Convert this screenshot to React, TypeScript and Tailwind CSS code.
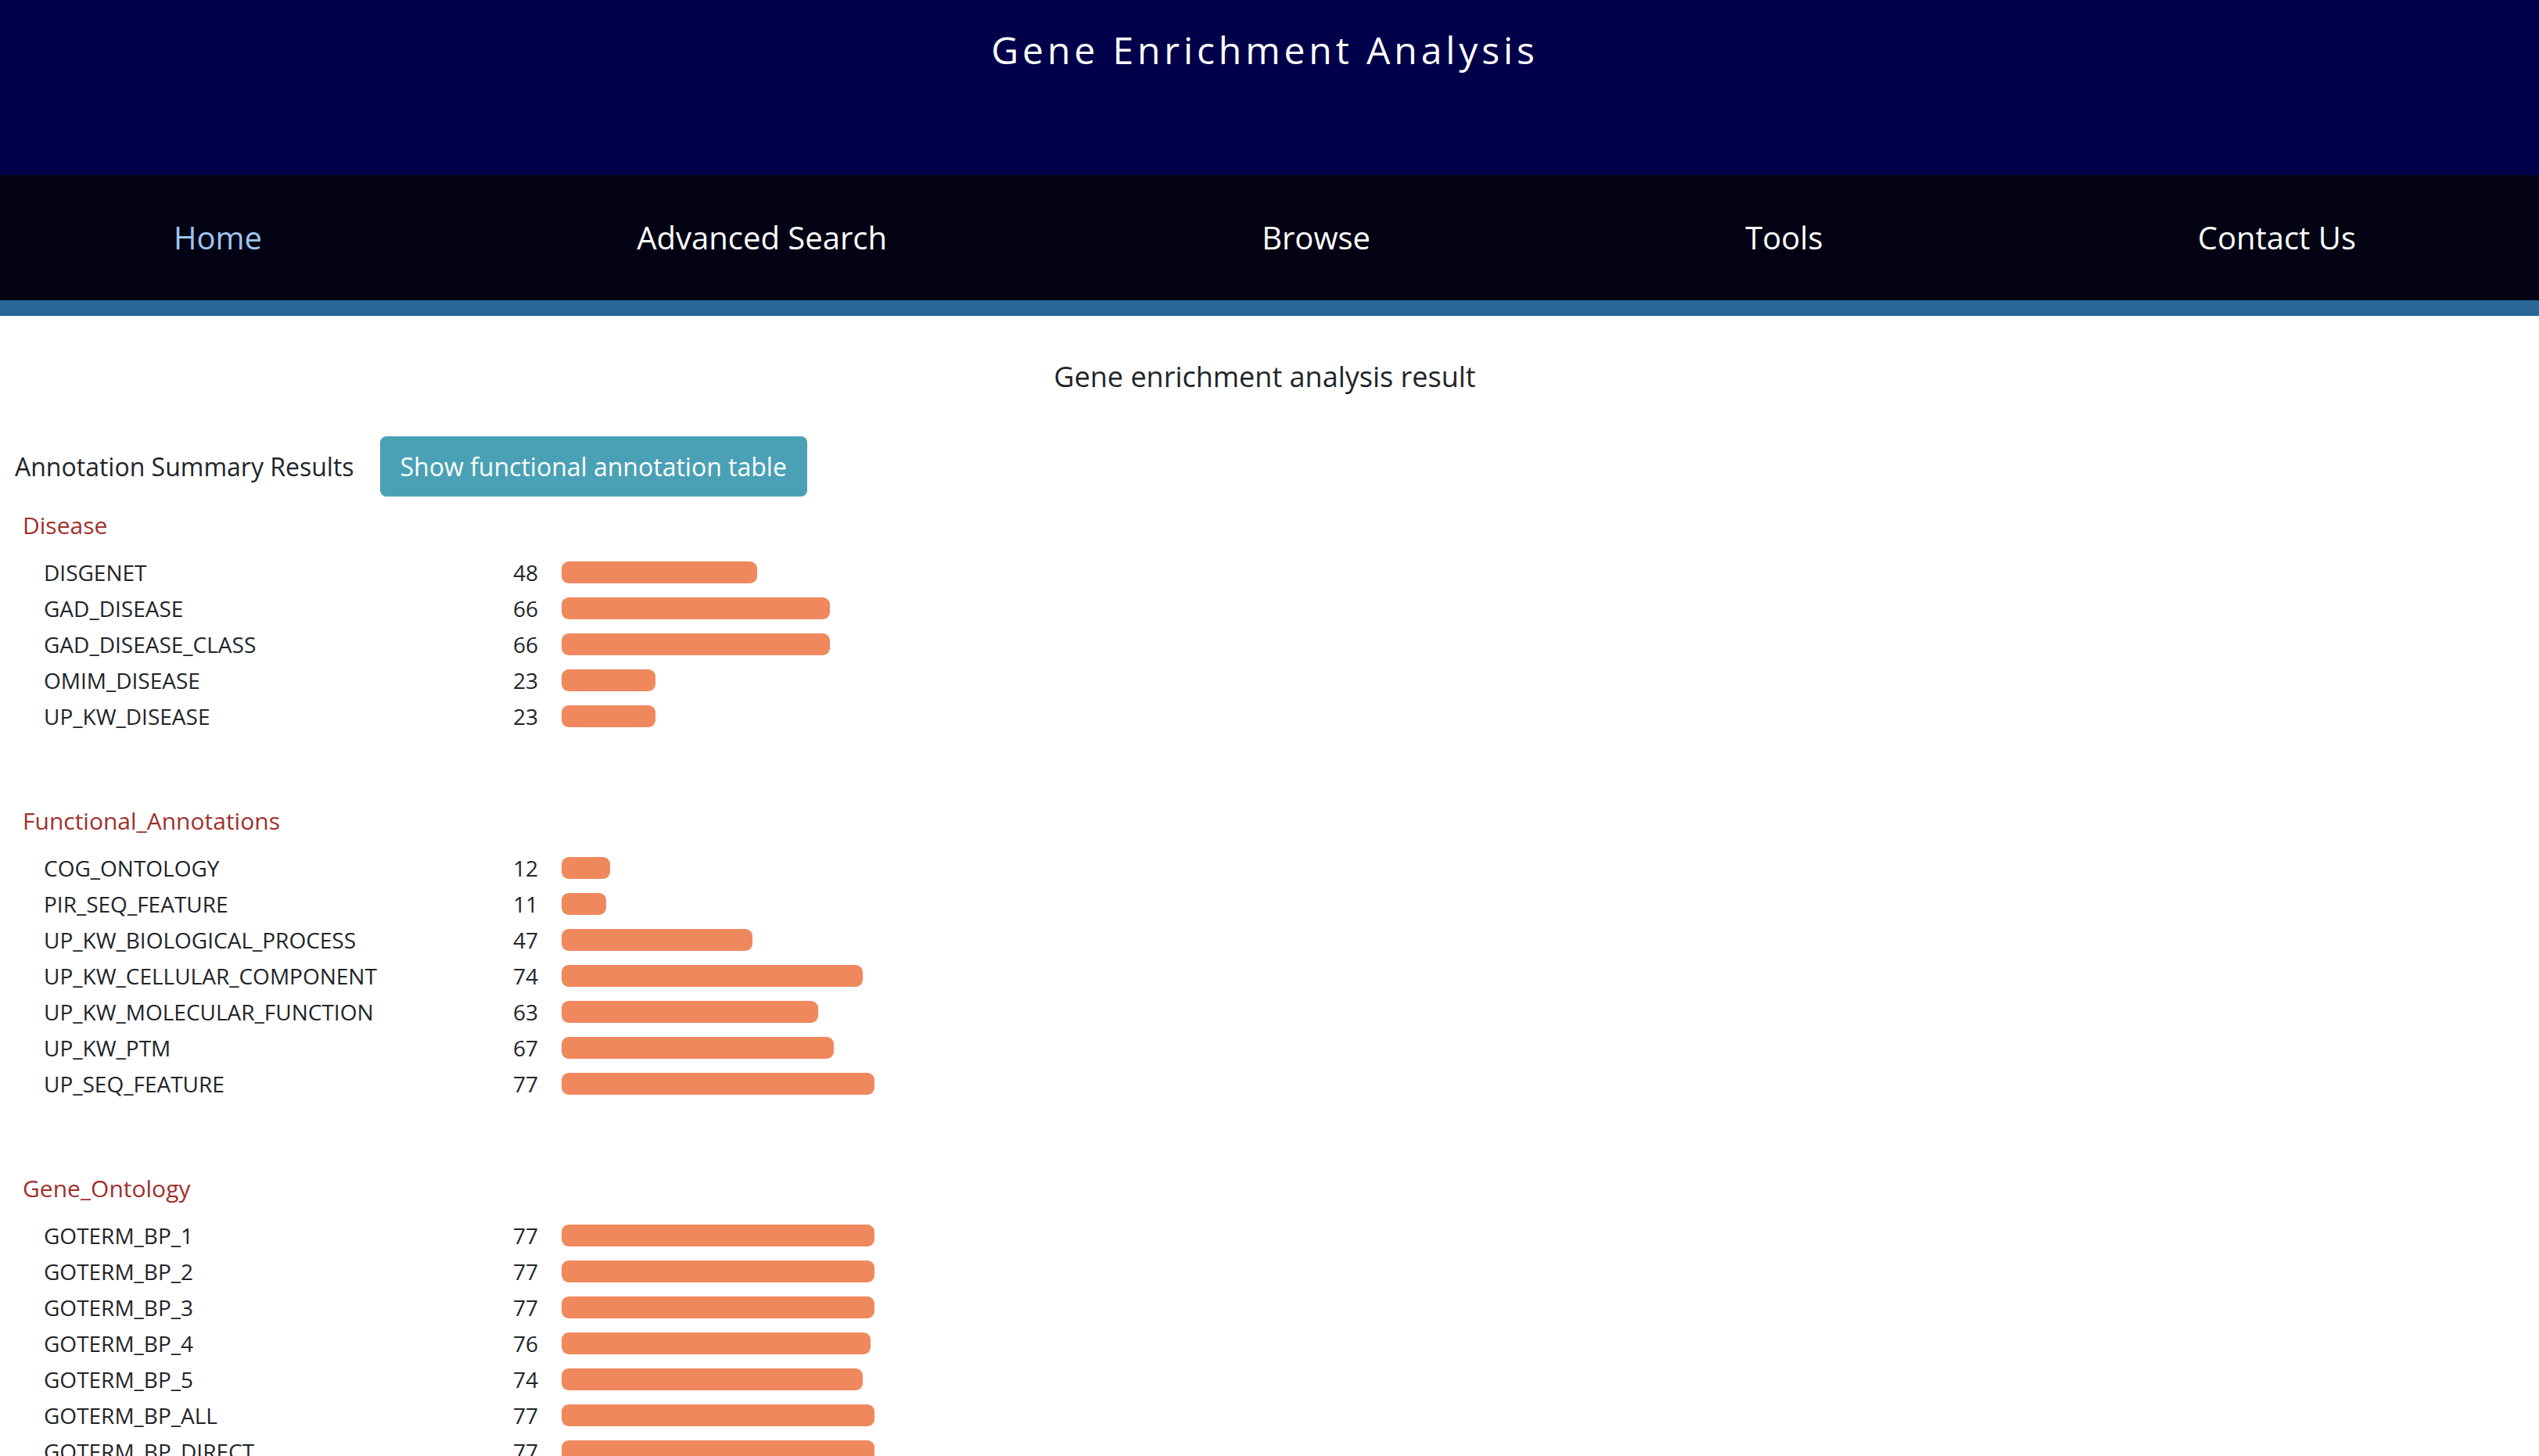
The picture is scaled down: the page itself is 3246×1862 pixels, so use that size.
import React from "react";

type Row = { name: string; value: number };
type Section = { title: string; rows: Row[] };

const sections: Section[] = [
  {
    title: "Disease",
    rows: [
      { name: "DISGENET", value: 48 },
      { name: "GAD_DISEASE", value: 66 },
      { name: "GAD_DISEASE_CLASS", value: 66 },
      { name: "OMIM_DISEASE", value: 23 },
      { name: "UP_KW_DISEASE", value: 23 },
    ],
  },
  {
    title: "Functional_Annotations",
    rows: [
      { name: "COG_ONTOLOGY", value: 12 },
      { name: "PIR_SEQ_FEATURE", value: 11 },
      { name: "UP_KW_BIOLOGICAL_PROCESS", value: 47 },
      { name: "UP_KW_CELLULAR_COMPONENT", value: 74 },
      { name: "UP_KW_MOLECULAR_FUNCTION", value: 63 },
      { name: "UP_KW_PTM", value: 67 },
      { name: "UP_SEQ_FEATURE", value: 77 },
    ],
  },
  {
    title: "Gene_Ontology",
    rows: [
      { name: "GOTERM_BP_1", value: 77 },
      { name: "GOTERM_BP_2", value: 77 },
      { name: "GOTERM_BP_3", value: 77 },
      { name: "GOTERM_BP_4", value: 76 },
      { name: "GOTERM_BP_5", value: 74 },
      { name: "GOTERM_BP_ALL", value: 77 },
      { name: "GOTERM_BP_DIRECT", value: 77 },
      { name: "GOTERM_CC_1", value: 77 },
      { name: "GOTERM_CC_2", value: 77 },
      { name: "GOTERM_CC_3", value: 77 },
    ],
  },
];

const navItems = ["Home", "Advanced Search", "Browse", "Tools", "Contact Us"];

export default function App() {
  return (
    <div className="min-h-screen bg-white font-['Open_Sans',sans-serif] text-[#212529]">
      <header className="h-[224px] bg-[#00004a] pt-[28px] pr-[12px]">
        <h1 className="text-center text-[48px] leading-[72px] tracking-[4.9px] font-normal text-white">
          Gene Enrichment Analysis
        </h1>
      </header>
      <nav className="flex h-[160px] items-center justify-between bg-[#030314] pl-[222px] pr-[234px]">
        {navItems.map((item, i) => (
          <a
            key={item}
            className={
              i === 0
                ? "text-[40px] leading-[60px] text-[#9ec5f0]"
                : "text-[40px] leading-[60px] text-white"
            }
          >
            {item}
          </a>
        ))}
      </nav>
      <div className="h-[20px] bg-[#2a6696]" />
      <main>
        <h2 className="mt-[52px] pr-[12px] text-center text-[36px] leading-[51px] font-normal">
          Gene enrichment analysis result
        </h2>
        <div className="pl-[19px]">
          <div className="mt-[51px] flex items-center gap-[33px]">
            <span className="text-[32px] leading-[48px]">Annotation Summary Results</span>
            <button className="flex h-[77px] items-center rounded-[8px] bg-[#4aa1b5] px-[26px] text-[32px] leading-[48px] text-white">
              Show functional annotation table
            </button>
          </div>
          <div className="mt-[14px]">
            {sections.map((s) => (
              <section key={s.title} className="mb-[88px]">
                <h3 className="pl-[10px] text-[30px] leading-[45px] font-normal text-[#a1302d]">
                  {s.title}
                </h3>
                <div className="mt-[15px]">
                  {s.rows.map((r) => (
                    <div key={r.name} className="flex h-[46px] items-center text-[28px] leading-[46px]">
                      <span className="w-[637px] pl-[37px]">{r.name}</span>
                      <span className="w-[62px]">{r.value}</span>
                      <div
                        className="h-[28px] rounded-[9px] bg-[#f0885e]"
                        style={{ width: `${Math.round(r.value * 5.2)}px` }}
                      />
                    </div>
                  ))}
                </div>
              </section>
            ))}
          </div>
        </div>
      </main>
    </div>
  );
}
